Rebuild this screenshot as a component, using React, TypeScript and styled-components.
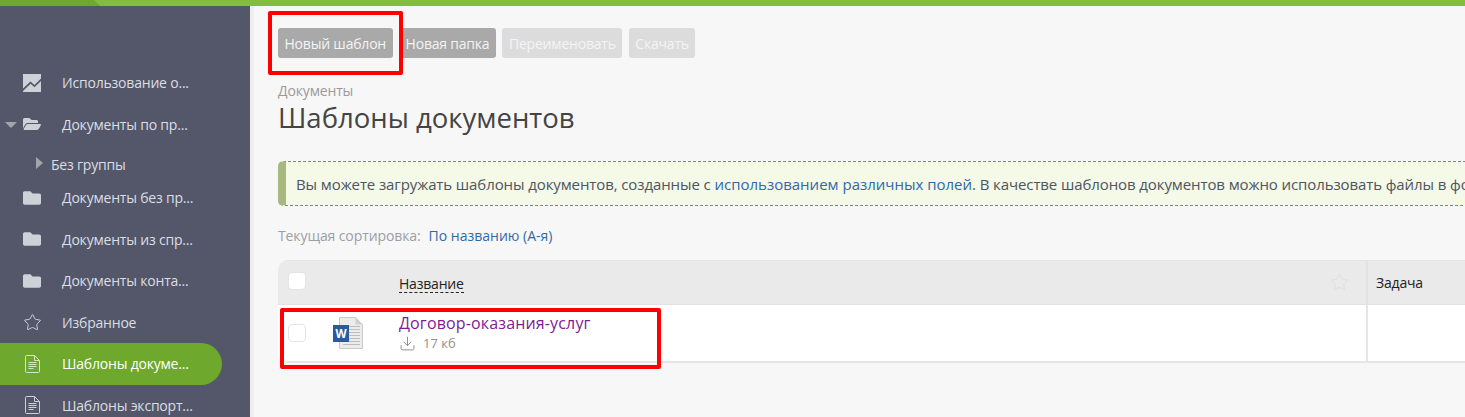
import React from 'react';
import styled, { createGlobalStyle } from 'styled-components';
import { Star, Download } from 'lucide-react';
import { FaFolder, FaFolderOpen } from 'react-icons/fa';

const GlobalStyle = createGlobalStyle`
  html, body {
    margin: 0;
    padding: 0;
    height: 417px;
    overflow: hidden;
    background: #f7f7f7;
    font-family: "Open Sans", "Noto Sans", sans-serif;
  }
`;

const Page = styled.div`
  position: relative;
  width: 1465px;
  height: 417px;
  overflow: hidden;
  display: flex;
  flex-direction: column;
`;

const TopBar = styled.div`
  flex: none;
  height: 6px;
  background: #82bd3c;
`;

const TopBarTab = styled.div`
  width: 100px;
  height: 6px;
  background: #6fa82c;
  clip-path: polygon(0 0, 94px 0, 100px 6px, 0 6px);
`;

const Body = styled.div`
  flex: 1;
  display: flex;
  min-height: 0;
`;

const Sidebar = styled.nav`
  flex: none;
  width: 250px;
  box-sizing: border-box;
  padding-top: 56px;
  background: #535769;
`;

const SideStrip = styled.div`
  flex: none;
  width: 4px;
  background: #eeeeee;
`;

const NavRow = styled.div<{ $active?: boolean }>`
  position: relative;
  display: flex;
  align-items: center;
  width: 222px;
  height: 41.5px;
  box-sizing: border-box;
  padding-left: 23px;
  border-radius: 0 21px 21px 0;
  font-size: 14px;
  letter-spacing: -0.2px;
  white-space: nowrap;
  color: ${p => (p.$active ? '#ffffff' : '#dcdee4')};
  background: ${p => (p.$active ? '#6ea82c' : 'transparent')};
`;

const NavIcon = styled.span`
  flex: none;
  width: 39px;
  display: flex;
  align-items: center;
  color: #cfd1d8;
`;

const DocSlot = styled.span`
  display: flex;
  padding-left: 2px;
`;

const Caret = styled.span<{ $open?: boolean }>`
  position: absolute;
  left: ${p => (p.$open ? '5px' : '36px')};
  top: ${p => (p.$open ? '18px' : '12px')};
  width: 0;
  height: 0;
  border-style: solid;
  border-color: transparent;
  ${p =>
    p.$open
      ? 'border-width: 6px 6px 0 6px; border-top-color: #a3a5ad;'
      : 'border-width: 6px 0 6px 7px; border-left-color: #a3a5ad;'}
`;

const SubRow = styled.div`
  position: relative;
  height: 32px;
  box-sizing: border-box;
  padding: 9px 0 0 51px;
  font-size: 14px;
  letter-spacing: -0.2px;
  line-height: 22px;
  color: #dcdee4;
`;

const Main = styled.main`
  flex: 1;
  min-width: 0;
  padding: 22px 0 0 24px;
`;

const Toolbar = styled.div`
  display: flex;
  gap: 6.5px;
`;

const ToolButton = styled.button<{ $disabled?: boolean }>`
  height: 30px;
  padding: 0 6.5px;
  border: 0;
  border-radius: 3px;
  font: inherit;
  font-size: 14px;
  letter-spacing: -0.2px;
  white-space: nowrap;
  color: #f4f4f4;
  background: ${p => (p.$disabled ? '#dcdcdc' : '#a9a9a9')};
`;

const Crumb = styled.div`
  margin-top: 24px;
  font-size: 14px;
  line-height: 18px;
  letter-spacing: -0.15px;
  color: #9a9a9a;
`;

const Title = styled.h1`
  margin: 0;
  font-size: 27.5px;
  line-height: 36px;
  font-weight: 400;
  color: #444444;
`;

const Notice = styled.div`
  margin-top: 25px;
  width: 1400px;
  height: 45px;
  box-sizing: border-box;
  display: flex;
  align-items: center;
  padding-left: 10px;
  border: 1px dashed #7f9440;
  border-left: 8px solid #a8b97f;
  border-right: 0;
  border-radius: 5px 0 0 5px;
  background: #f4f9e8;
  font-size: 15px;
  letter-spacing: -0.1px;
  white-space: nowrap;
  overflow: hidden;
  color: #4e5560;
`;

const TextLink = styled.a`
  color: #2f6aa8;
  text-decoration: none;
  letter-spacing: 0;
`;

const SortLine = styled.div`
  margin-top: 20px;
  display: flex;
  gap: 8px;
  font-size: 14px;
  line-height: 20px;
  letter-spacing: -0.1px;
  color: #9a9ea6;
`;

const Table = styled.div`
  margin-top: 14px;
  width: 1300px;
  border-radius: 10px 0 0 10px;
  overflow: hidden;
  background: #ffffff;
`;

const HeaderRow = styled.div`
  display: grid;
  grid-template-columns: 121px 969px 1fr;
  height: 45px;
  background: #eaeaea;
  border-top: 1px solid #e3e3e3;
  border-bottom: 1px solid #e2e2e2;
  box-sizing: border-box;
`;

const DataRow = styled.div`
  display: grid;
  grid-template-columns: 121px 969px 1fr;
  height: 58px;
  box-sizing: border-box;
  background: #ffffff;
  border-bottom: 2px solid #e6e6e6;
`;

const HeadLeadCell = styled.div`
  padding: 11px 0 0 10px;
`;

const DataLeadCell = styled.div`
  display: flex;
  align-items: center;
  padding-left: 10px;
  gap: 27px;
`;

const Check = styled.span`
  flex: none;
  display: block;
  width: 16px;
  height: 16px;
  border: 1px solid #e4e4e4;
  border-radius: 4px;
  background: #ffffff;
`;

const NameHeadCell = styled.div`
  display: flex;
  align-items: center;
  justify-content: space-between;
  padding-right: 17px;
  border-right: 2px solid #e2e2e2;
  color: #dedede;
`;

const SortLabel = styled.span`
  font-size: 14px;
  letter-spacing: -0.2px;
  line-height: 17px;
  margin-top: 2px;
  color: #222222;
  border-bottom: 1px dashed #222222;
`;

const HeadCell = styled.div`
  display: flex;
  align-items: center;
  padding-left: 8px;
  font-size: 14px;
  letter-spacing: -0.2px;
  color: #222222;
`;

const NameCell = styled.div`
  padding-top: 8px;
  border-right: 2px solid #e6e6e6;
`;

const FileLink = styled.a`
  display: block;
  font-size: 16px;
  line-height: 21px;
  letter-spacing: 0.15px;
  color: #7f1a96;
  text-decoration: none;
`;

const FileMeta = styled.div`
  display: flex;
  align-items: center;
  gap: 7px;
  font-size: 13px;
  line-height: 19px;
  color: #9a8f88;
  svg {
    color: #8f8f8f;
  }
`;

const Marker = styled.div<{ $x: number; $y: number; $w: number; $h: number }>`
  position: absolute;
  left: ${p => p.$x}px;
  top: ${p => p.$y}px;
  width: ${p => p.$w}px;
  height: ${p => p.$h}px;
  box-sizing: border-box;
  border: 4px solid #fd0000;
  border-radius: 2px;
`;

const ChartIcon = () => (
  <svg width="18" height="18" viewBox="0 0 18 18">
    <path
      fill="#cfd1d8"
      d="M0 0h18v4.5l-6.5 6.5-4-3.5L0 14.5zM0 17 7.6 9.8l3.9 3.5L18 7v11H0z"
    />
  </svg>
);

const DocIcon = ({ color }: { color: string }) => (
  <svg width="15" height="18" viewBox="0 0 15 18" fill="none" stroke={color} strokeWidth="1">
    <path d="M1.5.5h8l5 5v11a1 1 0 0 1-1 1h-12a1 1 0 0 1-1-1v-15a1 1 0 0 1 1-1zM9.5.5v5h5" />
    <path d="M3.5 7.5h8M3.5 9.5h8M3.5 11.5h8M3.5 13.5h5" />
  </svg>
);

const WordIcon = () => (
  <svg width="30" height="32" viewBox="0 0 30 32">
    <path fill="#ececec" stroke="#c9c9c9" d="M6.5.5h16l7 7v24h-23z" />
    <path fill="#d0d0d0" d="M22.5.5v7h7z" />
    <path
      stroke="#bdbdbd"
      strokeWidth="1"
      d="M16 9.5h11M16 12.5h11M16 15.5h11M16 18.5h11M16 21.5h11M16 24.5h11M10 27.5h17"
    />
    <rect x="0" y="8" width="16" height="17" fill="#2b5a9e" />
    <text x="8" y="21" textAnchor="middle" fontSize="11.5" fontWeight="700" fill="#ffffff" fontFamily="Open Sans, sans-serif">
      W
    </text>
  </svg>
);

const navBefore = [
  { label: 'Использование о...', icon: <ChartIcon /> },
  { label: 'Документы по пр...', icon: <FaFolderOpen size={18} />, open: true },
];

const navAfter = [
  { label: 'Документы без пр...', icon: <FaFolder size={18} /> },
  { label: 'Документы из спр...', icon: <FaFolder size={18} /> },
  { label: 'Документы конта...', icon: <FaFolder size={18} /> },
  { label: 'Избранное', icon: <Star size={19} strokeWidth={1.2} /> },
  { label: 'Шаблоны докуме...', icon: <DocSlot><DocIcon color="#d5e6bd" /></DocSlot>, active: true },
  { label: 'Шаблоны экспорт...', icon: <DocSlot><DocIcon color="#cfd1d8" /></DocSlot> },
];

export default function App() {
  return (
    <Page>
      <GlobalStyle />
      <TopBar>
        <TopBarTab />
      </TopBar>
      <Body>
        <Sidebar>
          {navBefore.map(item => (
            <NavRow key={item.label}>
              {item.open && <Caret $open />}
              <NavIcon>{item.icon}</NavIcon>
              {item.label}
            </NavRow>
          ))}
          <SubRow>
            <Caret />
            Без группы
          </SubRow>
          {navAfter.map(item => (
            <NavRow key={item.label} $active={item.active}>
              <NavIcon>{item.icon}</NavIcon>
              {item.label}
            </NavRow>
          ))}
        </Sidebar>
        <SideStrip />
        <Main>
          <Toolbar>
            <ToolButton>Новый шаблон</ToolButton>
            <ToolButton>Новая папка</ToolButton>
            <ToolButton $disabled>Переименовать</ToolButton>
            <ToolButton $disabled>Скачать</ToolButton>
          </Toolbar>
          <Crumb>Документы</Crumb>
          <Title>Шаблоны документов</Title>
          <Notice>
            <span>
              Вы можете загружать шаблоны документов, созданные с{' '}
              <TextLink>использованием различных полей</TextLink>. В качестве шаблонов документов можно
              использовать файлы в форматах
            </span>
          </Notice>
          <SortLine>
            <span>Текущая сортировка:</span>
            <TextLink>По названию (А-я)</TextLink>
          </SortLine>
          <Table>
            <HeaderRow>
              <HeadLeadCell>
                <Check />
              </HeadLeadCell>
              <NameHeadCell>
                <SortLabel>Название</SortLabel>
                <Star size={19} strokeWidth={1.2} />
              </NameHeadCell>
              <HeadCell>Задача</HeadCell>
            </HeaderRow>
            <DataRow>
              <DataLeadCell>
                <Check />
                <WordIcon />
              </DataLeadCell>
              <NameCell>
                <FileLink>Договор-оказания-услуг</FileLink>
                <FileMeta>
                  <Download size={17} strokeWidth={1.4} />
                  17 кб
                </FileMeta>
              </NameCell>
              <div />
            </DataRow>
          </Table>
        </Main>
      </Body>
      <Marker $x={268} $y={11} $w={135} $h={64} />
      <Marker $x={280} $y={308} $w={381} $h={61} />
    </Page>
  );
}
